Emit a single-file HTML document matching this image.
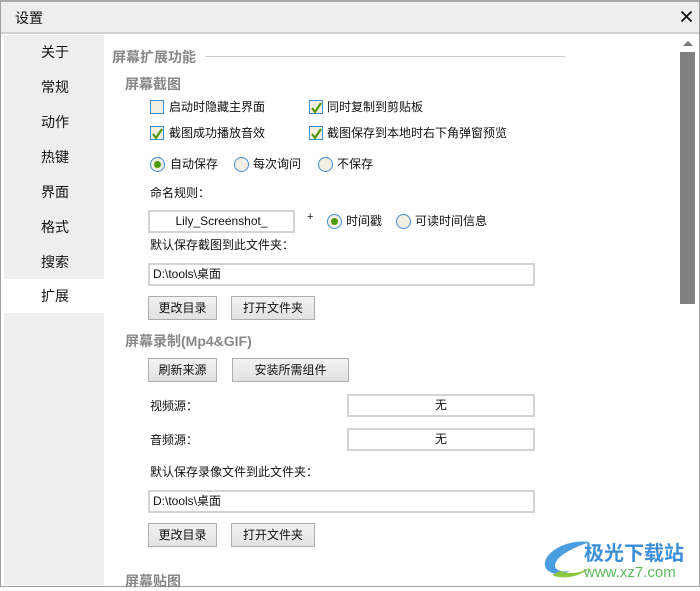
<!DOCTYPE html>
<html><head><meta charset="utf-8"><style>
*{margin:0;padding:0;box-sizing:border-box}
body{width:700px;height:587px;overflow:hidden;background:#fff;font-family:"Liberation Sans","Noto Sans CJK SC",sans-serif;font-size:12px;color:#111;position:relative}
.a{position:absolute;white-space:nowrap}
#win{position:absolute;left:0;top:0;width:700px;height:587px;border:1px solid #a0a0a0;border-top:2px solid #a8a8a8}
#title{position:absolute;left:1px;top:2px;width:698px;height:32px;background:#eeeeee;border-bottom:2px solid #d0d0d0}
#side{position:absolute;left:4px;top:35px;width:100px;height:550px;background:#eeeeee}
.nav{position:absolute;left:0;width:100px;height:34px;line-height:34px;padding-left:37px;font-size:14px}
.sel{background:#fff}
.h1{color:#888;font-weight:bold;font-size:14px}
.cb{position:absolute;width:14px;height:14px;border:1px solid #3c8fd9;background:#f3efe3}
.cb svg{position:absolute;left:0;top:0}
.rb{position:absolute;width:15px;height:15px;border:1px solid #3c8fd9;border-radius:50%;background:#f3efe3}
.rb.on::after{content:"";position:absolute;left:3px;top:3px;width:7px;height:7px;border-radius:50%;background:#4e9a06}
.in{position:absolute;height:23px;border:2px solid #d4d4d4;background:#fff;line-height:19px;font-size:12px}
.bt{position:absolute;height:24px;border:1px solid #adadad;background:linear-gradient(#f2f2f2,#e2e2e2);text-align:center;line-height:22px;font-size:12px}
</style></head><body>
<div id="win"></div>
<div id="title"></div>
<div class="a" style="left:15px;top:8px;font-size:14px">设置</div>
<svg class="a" style="left:680px;top:10px" width="13" height="13"><path d="M1.5 1.5L11.5 11.5M11.5 1.5L1.5 11.5" stroke="#111" stroke-width="1.8"/></svg>
<div id="side">
<div class="nav" style="top:0">关于</div>
<div class="nav" style="top:35px">常规</div>
<div class="nav" style="top:70px">动作</div>
<div class="nav" style="top:105px">热键</div>
<div class="nav" style="top:140px">界面</div>
<div class="nav" style="top:175px">格式</div>
<div class="nav" style="top:210px">搜索</div>
<div class="nav sel" style="top:244px">扩展</div>
</div>
<svg class="a" style="left:681px;top:39px" width="14" height="8"><path d="M2 7L7 2L12 7Z" fill="#777"/></svg>
<div class="a" style="left:680px;top:52px;width:15px;height:252px;background:#808080"></div>
<div class="a h1" style="left:112px;top:47px">屏幕扩展功能</div>
<div class="a" style="left:205px;top:56px;width:360px;height:1px;background:#ccc"></div>
<div class="a h1" style="left:125px;top:74px">屏幕截图</div>
<div class="cb" style="left:150px;top:100px"></div><div class="a" style="left:169px;top:98px">启动时隐藏主界面</div>
<div class="cb" style="left:309px;top:100px"><svg width="14" height="14"><path d="M2 7L5 11L11 2" stroke="#4e9a06" stroke-width="2.2" fill="none"/></svg></div><div class="a" style="left:327px;top:98px">同时复制到剪贴板</div>
<div class="cb" style="left:150px;top:126px"><svg width="14" height="14"><path d="M2 7L5 11L11 2" stroke="#4e9a06" stroke-width="2.2" fill="none"/></svg></div><div class="a" style="left:169px;top:124px">截图成功播放音效</div>
<div class="cb" style="left:309px;top:126px"><svg width="14" height="14"><path d="M2 7L5 11L11 2" stroke="#4e9a06" stroke-width="2.2" fill="none"/></svg></div><div class="a" style="left:327px;top:124px">截图保存到本地时右下角弹窗预览</div>
<div class="rb on" style="left:150px;top:157px"></div><div class="a" style="left:170px;top:155px">自动保存</div>
<div class="rb" style="left:234px;top:157px"></div><div class="a" style="left:253px;top:155px">每次询问</div>
<div class="rb" style="left:318px;top:157px"></div><div class="a" style="left:337px;top:155px">不保存</div>
<div class="a" style="left:150px;top:184px">命名规则：</div>
<div class="in" style="left:148px;top:210px;width:147px;text-align:center">Lily_Screenshot_</div>
<div class="a" style="left:307px;top:211px;font-size:11px">+</div>
<div class="rb on" style="left:327px;top:214px"></div><div class="a" style="left:346px;top:212px">时间戳</div>
<div class="rb" style="left:396px;top:214px"></div><div class="a" style="left:415px;top:212px">可读时间信息</div>
<div class="a" style="left:150px;top:236px">默认保存截图到此文件夹：</div>
<div class="in" style="left:148px;top:263px;width:387px;padding-left:3px">D:\tools\桌面</div>
<div class="bt" style="left:148px;top:296px;width:69px">更改目录</div>
<div class="bt" style="left:231px;top:296px;width:84px">打开文件夹</div>
<div class="a h1" style="left:125px;top:331px">屏幕录制(Mp4&amp;GIF)</div>
<div class="bt" style="left:148px;top:358px;width:69px">刷新来源</div>
<div class="bt" style="left:232px;top:358px;width:117px">安装所需组件</div>
<div class="a" style="left:150px;top:397px">视频源：</div>
<div class="in" style="left:347px;top:394px;width:188px;text-align:center">无</div>
<div class="a" style="left:150px;top:431px">音频源：</div>
<div class="in" style="left:347px;top:428px;width:188px;text-align:center">无</div>
<div class="a" style="left:150px;top:463px">默认保存录像文件到此文件夹：</div>
<div class="in" style="left:148px;top:490px;width:387px;padding-left:3px">D:\tools\桌面</div>
<div class="bt" style="left:148px;top:523px;width:69px">更改目录</div>
<div class="bt" style="left:231px;top:523px;width:84px">打开文件夹</div>
<div class="a h1" style="left:125px;top:571px">屏幕贴图</div>
<svg class="a" style="left:540px;top:537px" width="60" height="45"><path d="M50 5C30 2 8 12 5 25C3 36 18 40 30 34C20 36 12 32 16 25C20 17 35 10 50 5Z" fill="#4a9ee0"/><path d="M12 38C25 44 45 38 52 28C45 36 30 38 20 34Z" fill="#8cc63f"/></svg>
<div class="a" style="left:584px;top:537px;font-size:20px;font-weight:bold;color:#3a8fd8">极光下载站</div>
<div class="a" style="left:584px;top:564px;font-size:15px;color:#5cb85c">www.xz7.com</div>
</body></html>
